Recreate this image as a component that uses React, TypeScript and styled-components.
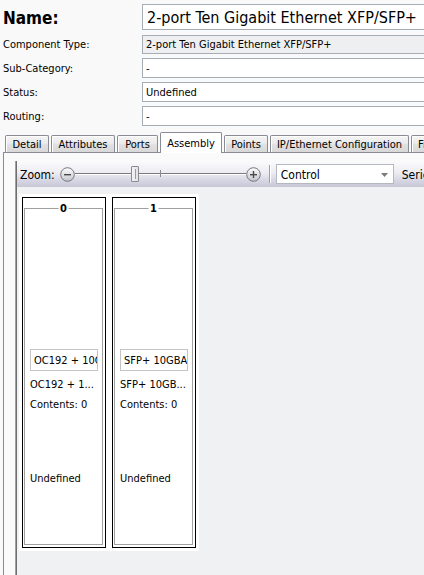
import React from "react";
import styled, { createGlobalStyle } from "styled-components";

const GlobalStyle = createGlobalStyle`
  html, body { margin: 0; padding: 0; }
  body {
    background: #f9f9f9;
    overflow: hidden;
    font-family: "DejaVu Sans Condensed", "DejaVu Sans", sans-serif;
    font-stretch: condensed;
    font-size: 11px;
    color: #000;
  }
`;

const Window = styled.div`
  width: 424px;
  height: 575px;
  overflow: hidden;
  background: #f9f9f9;
  display: flex;
  flex-direction: column;
`;

const Form = styled.div`
  display: grid;
  grid-template-columns: 139px 300px;
  row-gap: 4px;
  padding: 4px 0 0 3px;
  align-items: center;
`;

const Label = styled.div<{ $big?: boolean }>`
  font-size: ${(p) => (p.$big ? "17px" : "11px")};
  font-weight: ${(p) => (p.$big ? 700 : 400)};
  font-stretch: ${(p) => (p.$big ? "normal" : "condensed")};
  white-space: nowrap;
`;

const Field = styled.div<{ $h: number; $readonly?: boolean; $big?: boolean; $mb?: number }>`
  box-sizing: border-box;
  height: ${(p) => p.$h}px;
  margin-bottom: ${(p) => p.$mb ?? 0}px;
  border: 1px solid #a7adb4;
  background: ${(p) => (p.$readonly ? "#eeeff0" : "#ffffff")};
  padding-left: ${(p) => (p.$big ? 4 : 3)}px;
  display: flex;
  align-items: center;
  white-space: nowrap;
  overflow: hidden;
  font-size: ${(p) => (p.$big ? "16px" : "11px")};
`;

const TabStrip = styled.div`
  display: flex;
  align-items: flex-end;
  gap: 2px;
  height: 20px;
  margin: 6px 0 0 5px;
  position: relative;
  z-index: 1;
`;

const Tab = styled.div<{ $w: number; $active?: boolean }>`
  flex: none;
  box-sizing: border-box;
  width: ${(p) => p.$w}px;
  height: ${(p) => (p.$active ? 21 : 17)}px;
  margin-bottom: ${(p) => (p.$active ? -1 : 0)}px;
  border: 1px solid #898c95;
  border-bottom: none;
  border-radius: 2px 2px 0 0;
  background: ${(p) =>
    p.$active
      ? "#ffffff"
      : "linear-gradient(#f4f4f4, #ebebeb 45%, #e0e0e0 55%, #d8d8d8)"};
  box-shadow: ${(p) => (p.$active ? "none" : "inset 1px 1px 0 #ffffff")};
  display: flex;
  align-items: center;
  justify-content: center;
  white-space: nowrap;
  overflow: hidden;
  font-size: 11px;
`;

const Panel = styled.div`
  flex: 1;
  min-height: 0;
  display: flex;
  margin-left: 3px;
  border-top: 1px solid #898c95;
  border-left: 1px solid #898c95;
  background: #fafafa;
  padding: 8px 0 0 11px;
`;

const Workspace = styled.div`
  flex: 1;
  min-width: 0;
  display: flex;
  flex-direction: column;
  border-left: 1px solid #a0a0a0;
  box-shadow: inset 1px 0 0 #6e6e6e;
  padding-left: 1px;
`;

const Toolbar = styled.div`
  flex: none;
  height: 26px;
  display: flex;
  align-items: center;
  padding-left: 3px;
  white-space: nowrap;
  overflow: hidden;
  background: linear-gradient(#fbfbfd, #ececf2 45%, #dadae6 70%, #c6c6d6);
  font-size: 12px;
`;

const ToolText = styled.span<{ $ml?: number }>`
  flex: none;
  margin-left: ${(p) => p.$ml ?? 0}px;
  padding-top: 2px;
`;

const ZoomIcon = styled.svg<{ $ml?: number }>`
  flex: none;
  display: block;
  margin-left: ${(p) => p.$ml ?? 0}px;
`;

const Track = styled.div`
  flex: none;
  position: relative;
  width: 171px;
  height: 18px;
  &::before {
    content: "";
    position: absolute;
    left: 0;
    right: 0;
    top: 8px;
    height: 1px;
    background: #7a7a82;
    box-shadow: 0 1px 0 #ffffff;
  }
`;

const Thumb = styled.div`
  position: absolute;
  left: 56px;
  top: 1px;
  width: 8px;
  height: 16px;
  box-sizing: border-box;
  border: 1px solid #8a8a90;
  border-radius: 1px;
  background: linear-gradient(90deg, #f4f4f6, #e2e2e8);
  &::after {
    content: "";
    position: absolute;
    left: 3px;
    top: 2px;
    width: 1px;
    height: 10px;
    background: #9a9aa2;
  }
`;

const Tick = styled.div`
  position: absolute;
  left: 85px;
  top: 5px;
  width: 1px;
  height: 7px;
  background: #8a8a92;
`;

const Separator = styled.div`
  flex: none;
  width: 1px;
  height: 18px;
  margin-left: 8px;
  background: #9c9cac;
  box-shadow: 1px 0 0 #ffffff;
`;

const Combo = styled.div`
  flex: none;
  box-sizing: border-box;
  width: 118px;
  height: 20px;
  margin-left: 6px;
  border: 1px solid #b4b8c0;
  background: #ffffff;
  display: flex;
  align-items: center;
  padding-left: 4px;
  padding-top: 1px;
  position: relative;
`;

const ComboArrow = styled.svg`
  position: absolute;
  right: 5px;
  top: 8px;
`;

const Canvas = styled.div`
  flex: 1;
  min-height: 0;
  background: #f0f1f3;
  padding: 7px 0 0 2px;
`;

const Board = styled.div`
  width: 180px;
  height: 357px;
  box-sizing: border-box;
  background: #ffffff;
  display: flex;
  align-items: flex-start;
  gap: 6px;
  padding: 3px 0 0 3px;
`;

const Card = styled.div`
  flex: none;
  box-sizing: border-box;
  width: 84px;
  height: 351px;
  border: 1px solid #000000;
  padding: 10px 2px 2px 1px;
  display: flex;
`;

const Slot = styled.div`
  flex: 1;
  min-width: 0;
  position: relative;
  border: 1px solid #a0a0a0;
  display: flex;
  flex-direction: column;
  padding: 140px 4px 0 5px;
`;

const SlotLegend = styled.div`
  position: absolute;
  left: 50%;
  top: -7px;
  transform: translateX(-50%);
  background: #ffffff;
  padding: 0 2px;
  font-weight: 700;
  font-size: 11px;
  font-stretch: normal;
  line-height: 13px;
`;

const Chip = styled.div`
  box-sizing: border-box;
  height: 22px;
  border: 1px solid #c4c4c4;
  background: #ffffff;
  padding-left: 3px;
  display: flex;
  align-items: center;
  white-space: nowrap;
  overflow: hidden;
`;

const SlotLine = styled.div<{ $mt: number }>`
  margin-top: ${(p) => p.$mt}px;
  line-height: 14px;
  height: 14px;
  white-space: nowrap;
  overflow: hidden;
`;

const ZoomButton: React.FC<{ plus?: boolean; ml?: number; id: string }> = ({ plus, ml, id }) => (
  <ZoomIcon $ml={ml} width="15" height="15" viewBox="0 0 15 15">
    <defs>
      <linearGradient id={id} x1="0" y1="0" x2="0" y2="1">
        <stop offset="0" stopColor="#fdfdfd" />
        <stop offset="1" stopColor="#c4c4cc" />
      </linearGradient>
    </defs>
    <circle cx="7.5" cy="7.5" r="6.8" fill={`url(#${id})`} stroke="#76767e" strokeWidth="1" />
    <rect x="4" y="7" width="7" height="1.4" fill="#4a4a50" />
    {plus && <rect x="6.8" y="4" width="1.4" height="7" fill="#4a4a50" />}
  </ZoomIcon>
);

const slots = [
  { n: "0", chip: "OC192 + 10GBASE-R", name: "OC192 + 1...", status: "Undefined" },
  { n: "1", chip: "SFP+ 10GBASE-SR", name: "SFP+ 10GB...", status: "Undefined" },
];

const tabs = [
  { t: "Detail", w: 44 },
  { t: "Attributes", w: 64 },
  { t: "Ports", w: 41 },
  { t: "Assembly", w: 62, active: true },
  { t: "Points", w: 44 },
  { t: "IP/Ethernet Configuration", w: 139 },
  { t: "Fields", w: 42 },
];

export default function App() {
  return (
    <>
      <GlobalStyle />
      <Window>
        <Form>
          <Label $big>Name:</Label>
          <Field $h={26} $big $mb={1}>2-port Ten Gigabit Ethernet XFP/SFP+</Field>
          <Label>Component Type:</Label>
          <Field $h={19} $readonly>2-port Ten Gigabit Ethernet XFP/SFP+</Field>
          <Label>Sub-Category:</Label>
          <Field $h={20}>-</Field>
          <Label>Status:</Label>
          <Field $h={20}>Undefined</Field>
          <Label>Routing:</Label>
          <Field $h={20}>-</Field>
        </Form>
        <TabStrip>
          {tabs.map((t) => (
            <Tab key={t.t} $w={t.w} $active={t.active}>
              {t.t}
            </Tab>
          ))}
        </TabStrip>
        <Panel>
          <Workspace>
            <Toolbar>
              <ToolText>Zoom:</ToolText>
              <ZoomButton id="zminus" ml={5} />
              <Track>
                <Tick />
                <Thumb />
              </Track>
              <ZoomButton id="zplus" plus />
              <Separator />
              <Combo>
                Control
                <ComboArrow width="7" height="4" viewBox="0 0 7 4">
                  <path d="M0 0 H7 L3.5 4 Z" fill="#7a7a7a" />
                </ComboArrow>
              </Combo>
              <ToolText $ml={8}>Series</ToolText>
            </Toolbar>
            <Canvas>
              <Board>
                {slots.map((s) => (
                  <Card key={s.n}>
                    <Slot>
                      <SlotLegend>{s.n}</SlotLegend>
                      <Chip>{s.chip}</Chip>
                      <SlotLine $mt={7}>{s.name}</SlotLine>
                      <SlotLine $mt={6}>Contents: 0</SlotLine>
                      <SlotLine $mt={60}>{s.status}</SlotLine>
                    </Slot>
                  </Card>
                ))}
              </Board>
            </Canvas>
          </Workspace>
        </Panel>
      </Window>
    </>
  );
}
